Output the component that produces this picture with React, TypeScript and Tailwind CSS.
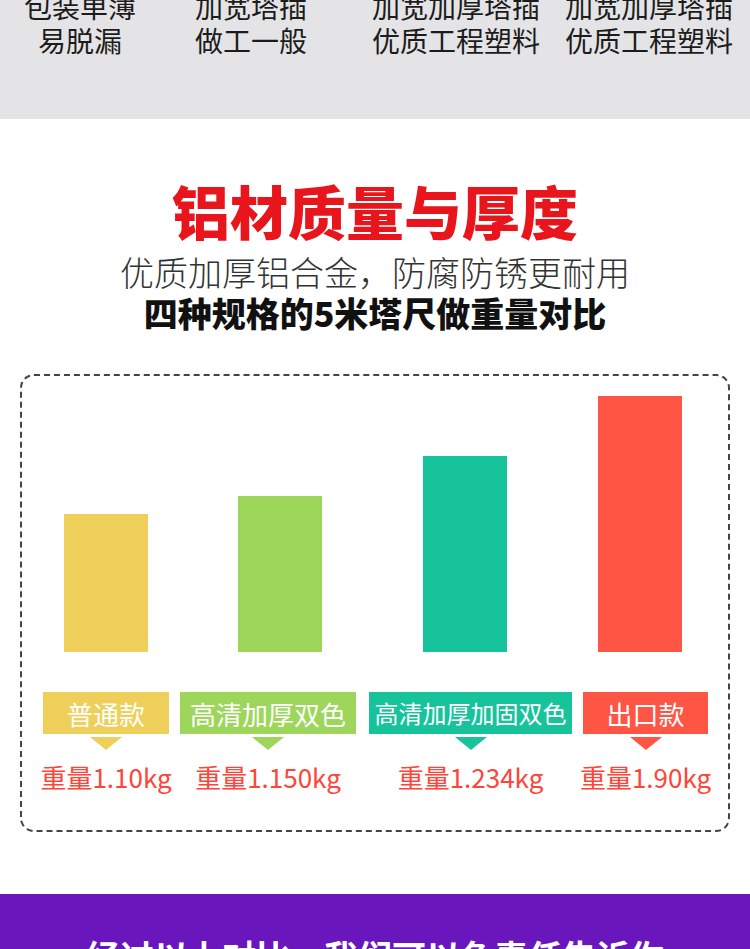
import React from 'react';

const font = { fontFamily: '"Noto Sans CJK SC", "Noto Sans", sans-serif' };

const topCols = [
  { w: 'w-[160px]', lines: ['包装单薄', '易脱漏'] },
  { w: 'w-[182px]', lines: ['加宽塔插', '做工一般'] },
  { w: 'w-[228px]', lines: ['加宽加厚塔插', '优质工程塑料'] },
  { w: 'w-[158px]', lines: ['加宽加厚塔插', '优质工程塑料'] },
];

export default function App() {
  return (
    <div className="w-[750px] h-[949px] bg-white overflow-hidden" style={font}>
      {/* Top gray strip, tail of the previous comparison */}
      <div className="h-[119px] bg-[#e4e4e6] overflow-hidden">
        <div className="flex -mt-[11px] text-[28px] leading-[34px] text-[#1c1c1c]">
          {topCols.map((c, i) => (
            <div key={i} className={`${c.w} flex flex-col items-center`}>
              {c.lines.map((l) => (
                <span key={l} className="whitespace-nowrap">{l}</span>
              ))}
            </div>
          ))}
        </div>
      </div>

      {/* Heading */}
      <div className="flex flex-col items-center pt-[62px]">
        <h1 className="text-[58px] leading-none font-black text-[#e8161c]">铝材质量与厚度</h1>
        <p className="mt-[16px] text-[34px] leading-none font-light text-[#333]">优质加厚铝合金，防腐防锈更耐用</p>
        <p className="mt-[7px] text-[34px] leading-none font-black text-[#111]">四种规格的5米塔尺做重量对比</p>
      </div>

      {/* Chart box */}
      <div className="mx-[20px] mt-[44px] h-[458px] border-2 border-dashed border-[#444] rounded-[14px]">
        <div className="flex items-end h-[276px] pt-[20px]">
          <div className="ml-[42px] w-[84px] h-[138px] bg-[#eecf5a]" />
          <div className="ml-[90px] w-[84px] h-[156px] bg-[#9dd65b]" />
          <div className="ml-[101px] w-[84px] h-[196px] bg-[#17c39b]" />
          <div className="ml-[91px] w-[84px] h-[256px] bg-[#ff5545]" />
        </div>

        <div className="flex mt-[40px] pl-[21px]">
          <Label w="w-[126px]" bg="bg-[#eecf5a]" tri="border-t-[#eecf5a]" size="text-[26px]" text="普通款" weight="重量1.10kg" />
          <Label w="w-[176px] ml-[11px]" bg="bg-[#9dd65b]" tri="border-t-[#9dd65b]" size="text-[26px]" text="高清加厚双色" weight="重量1.150kg" />
          <Label w="w-[203px] ml-[13px]" bg="bg-[#17c39b]" tri="border-t-[#17c39b]" size="text-[24px]" text="高清加厚加固双色" weight="重量1.234kg" />
          <Label w="w-[125px] ml-[11px]" bg="bg-[#ff5545]" tri="border-t-[#ff5545]" size="text-[26px]" text="出口款" weight="重量1.90kg" />
        </div>
      </div>

      {/* Purple conclusion band */}
      <div className="mt-[62px] h-[55px] overflow-hidden bg-[#6a16bd] flex justify-center pt-[45px]">
        <p className="text-[34px] leading-none font-bold text-white whitespace-nowrap">经过以上对比，我们可以负责任告诉你</p>
      </div>
    </div>
  );
}

function Label({ w, bg, tri, size, text, weight }: { w: string; bg: string; tri: string; size: string; text: string; weight: string }) {
  return (
    <div className={`${w} flex flex-col items-center`}>
      <div className={`w-full h-[42px] ${bg} flex items-center justify-center text-white ${size} whitespace-nowrap`}>{text}</div>
      <div className={`mt-[3px] w-0 h-0 border-l-[16px] border-r-[16px] border-t-[13px] border-l-transparent border-r-transparent ${tri}`} />
      <div className="mt-[14px] text-[26px] leading-none text-[#ff4438] whitespace-nowrap">{weight}</div>
    </div>
  );
}
